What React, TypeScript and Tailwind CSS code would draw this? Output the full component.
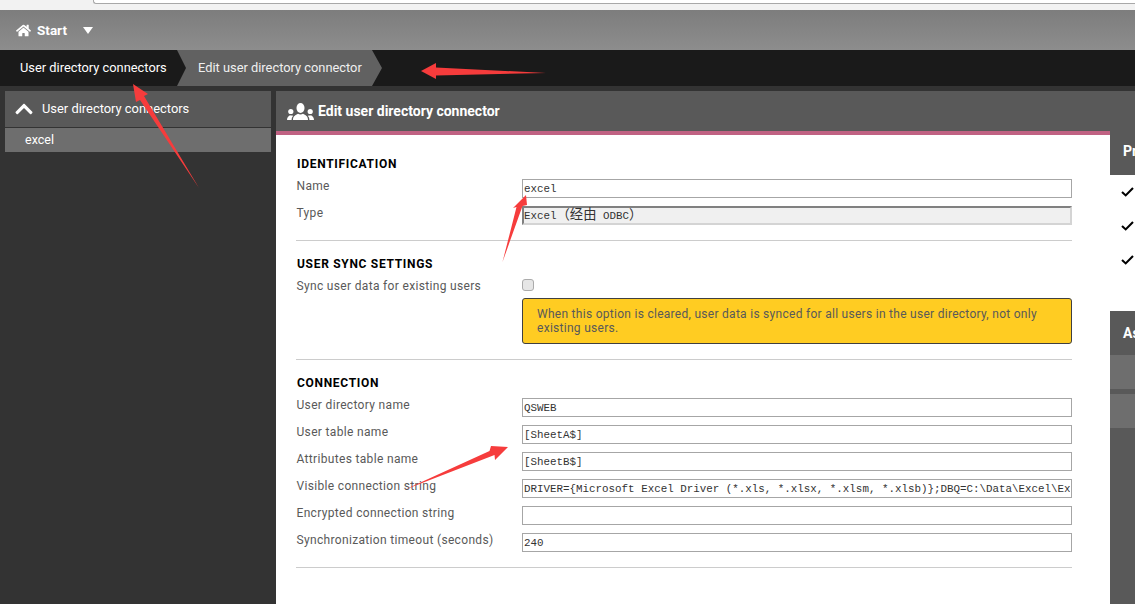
import { FaHome, FaChevronUp } from "react-icons/fa";

const sans = "font-['Roboto','Liberation_Sans',sans-serif]";
const mono = "font-['Liberation_Mono','Noto_Sans_CJK_SC',monospace]";
const label = "w-[226px] shrink-0 pl-[0.5px] text-[12px] leading-[14px] tracking-[0.33px] text-[#595959]";

function Field({ title, value }: { title: string; value: string }) {
  return (
    <div className="flex h-[19px] items-start">
      <div className={label}>{title}</div>
      <input
        readOnly
        value={value}
        className={`h-[19px] w-[550px] shrink-0 border border-[#a6a6a6] bg-white px-[1px] text-[10.85px] leading-[17px] text-[#333333] outline-none ${mono}`}
      />
    </div>
  );
}

function Heading({ children }: { children: string }) {
  return <h3 className="h-[14px] pl-[1px] text-[12px] font-bold leading-[14px] tracking-[0.7px] text-black">{children}</h3>;
}

function Arrow({ points }: { points: string }) {
  return <polygon points={points} fill="#f63c3c" />;
}

function Check() {
  return (
    <svg width="13" height="10" viewBox="0 0 13 10">
      <path d="M1 5L4.7 8.4L12 1" fill="none" stroke="#000" strokeWidth="2.1" />
    </svg>
  );
}

function UsersIcon() {
  return (
    <svg width="27" height="17" viewBox="0 0 27 17" fill="#fff">
      <ellipse cx="13.5" cy="5" rx="4" ry="5" />
      <path d="M6 17C6 13 8.5 12.2 11 10.8C12.5 11.6 14.5 11.6 16 10.8C18.5 12.2 21 13 21 17Z" />
      <circle cx="3.8" cy="8.5" r="2.6" />
      <path d="M0 17C0 14 1.5 13.3 3 12.2C3.8 12.6 4.6 12.6 5.4 12.4L6.2 13C5 14 4.6 15.5 4.6 17Z" />
      <circle cx="23.2" cy="8.5" r="2.6" />
      <path d="M27 17C27 14 25.5 13.3 24 12.2C23.2 12.6 22.4 12.6 21.6 12.4L20.8 13C22 14 22.4 15.5 22.4 17Z" />
    </svg>
  );
}

export default function App() {
  return (
    <div className={`relative flex h-[604px] w-[1135px] flex-col overflow-hidden bg-[#333333] ${sans}`}>
      <div className="h-[10px] shrink-0 bg-[#f2f2f2] pl-[93px]">
        <div className="h-[4px] rounded-bl-[3px] border-b border-l border-[#a8a8a8] bg-white" />
      </div>
      <div className="flex h-[40px] shrink-0 items-center bg-gradient-to-b from-[#7d7d7d] to-[#8d8d8d] pl-[16px] text-white">
        <FaHome className="h-[15px] w-[15px]" />
        <span className="ml-[6px] text-[13.5px] font-bold">Start</span>
        <svg className="ml-[16px]" width="10" height="7" viewBox="0 0 10 7">
          <path d="M0 0H10L5 7Z" fill="#fff" />
        </svg>
      </div>
      <div className="flex h-[36px] shrink-0 bg-[#1a1a1a] text-[12.85px] text-white">
        <div className="flex w-[177px] items-center pl-[20px]">User directory connectors</div>
        <div className="flex w-[205px] items-center bg-[#616161] pl-[21px] text-[#f0f0f0] [clip-path:polygon(0_0,195px_0,205px_50%,195px_100%,0_100%,9px_50%)]">
          Edit user directory connector
        </div>
      </div>
      <div className="flex min-h-0 flex-1 pt-[5px]">
        <aside className="ml-[5px] w-[266px] shrink-0 text-[12.9px] text-white">
          <div className="flex h-[36px] items-center bg-[#595959] pl-[9px]">
            <FaChevronUp className="h-[20px] w-[20px]" />
            <span className="ml-[8px]">User directory connectors</span>
          </div>
          <div className="mt-[1px] flex h-[24px] items-center bg-[#6e6e6e] pl-[20px] text-[12.5px]">excel</div>
        </aside>
        <div className="ml-[5px] flex w-[834px] shrink-0 flex-col">
          <div className="flex h-[44px] shrink-0 items-center border-b-4 border-[#c06283] bg-[#595959] pl-[11px] text-white">
            <UsersIcon />
            <span className="ml-[4px] text-[14px] font-bold">Edit user directory connector</span>
          </div>
          <main className="flex-1 bg-white pl-[20px] pt-[22px] text-[#595959]">
            <div className="w-[776px]">
              <Heading>IDENTIFICATION</Heading>
              <div className="mt-[8px] flex flex-col gap-[8px]">
                <Field title="Name" value="excel" />
                <div className="flex h-[19px] items-start">
                  <div className={label}>Type</div>
                  <div className={`h-[19px] w-[550px] whitespace-pre border-2 border-[#d4d4d4] border-l-[#808080] border-t-[#808080] bg-[#f0f0f0] text-[10.85px] leading-[16px] text-[#333333] ${mono}`}>
                    Excel<span className="text-[13.3px]">（经由</span> ODBC<span className="text-[13.3px]">）</span>
                  </div>
                </div>
              </div>
              <hr className="mt-[15px] border-[#cccccc]" />
              <div className="mt-[16px]">
                <Heading>USER SYNC SETTINGS</Heading>
              </div>
              <div className="mt-[8px] flex items-start">
                <div className={label}>Sync user data for existing users</div>
                <div className="w-[550px]">
                  <div className="h-[12px] w-[12px] rounded-[3px] border border-[#ababab] bg-[#e6e6e6]" />
                  <div className="mt-[7px] h-[46px] rounded-[3px] border border-[#404040] bg-[#ffcc22] px-[14px] pt-[8px] text-[12px] leading-[14px] tracking-[0.28px] text-[#595959]">
                    When this option is cleared, user data is synced for all users in the user directory, not only existing users.
                  </div>
                </div>
              </div>
              <hr className="mt-[15px] border-[#cccccc]" />
              <div className="mt-[16px]">
                <Heading>CONNECTION</Heading>
              </div>
              <div className="mt-[8px] flex flex-col gap-[8px]">
                <Field title="User directory name" value="QSWEB" />
                <Field title="User table name" value="[SheetA$]" />
                <Field title="Attributes table name" value="[SheetB$]" />
                <Field title="Visible connection string" value="DRIVER={Microsoft Excel Driver (*.xls, *.xlsx, *.xlsm, *.xlsb)};DBQ=C:\Data\Excel\Ex" />
                <Field title="Encrypted connection string" value="" />
                <Field title="Synchronization timeout (seconds)" value="240" />
              </div>
              <hr className="mt-[15px] border-[#cccccc]" />
            </div>
          </main>
        </div>
        <div className="w-[25px] shrink-0 overflow-hidden bg-[#333333]">
          <div className="flex h-[84px] items-end bg-[#595959] pb-[13px] pl-[13px] text-[14px] font-bold text-white">Pr</div>
          <div className="flex h-[136px] flex-col gap-[24px] bg-white pl-[11px] pt-[12px]">
            <Check />
            <Check />
            <Check />
          </div>
          <div className="flex h-[44px] items-center bg-[#595959] pl-[13px] text-[14px] font-bold text-white">As</div>
          <div className="h-[34px] bg-[#6e6e6e]" />
          <div className="h-[5px] bg-[#595959]" />
          <div className="h-[34px] bg-[#6e6e6e]" />
          <div className="h-[200px] bg-[#595959]" />
        </div>
      </div>
      <svg className="pointer-events-none absolute left-0 top-0" width="1135" height="604" viewBox="0 0 1135 604">
        <Arrow points="133,84 148,94 144,96 199,188 140,100 136,102" />
        <Arrow points="421,71 436,63 436,67.5 546,73 436,75.5 436,79" />
        <Arrow points="526,195 527,205 522.5,206 502.5,262 516.5,207 513,208" />
        <Arrow points="508,447 495,460 494.5,455 404,490 489.5,451 491,446" />
      </svg>
    </div>
  );
}
